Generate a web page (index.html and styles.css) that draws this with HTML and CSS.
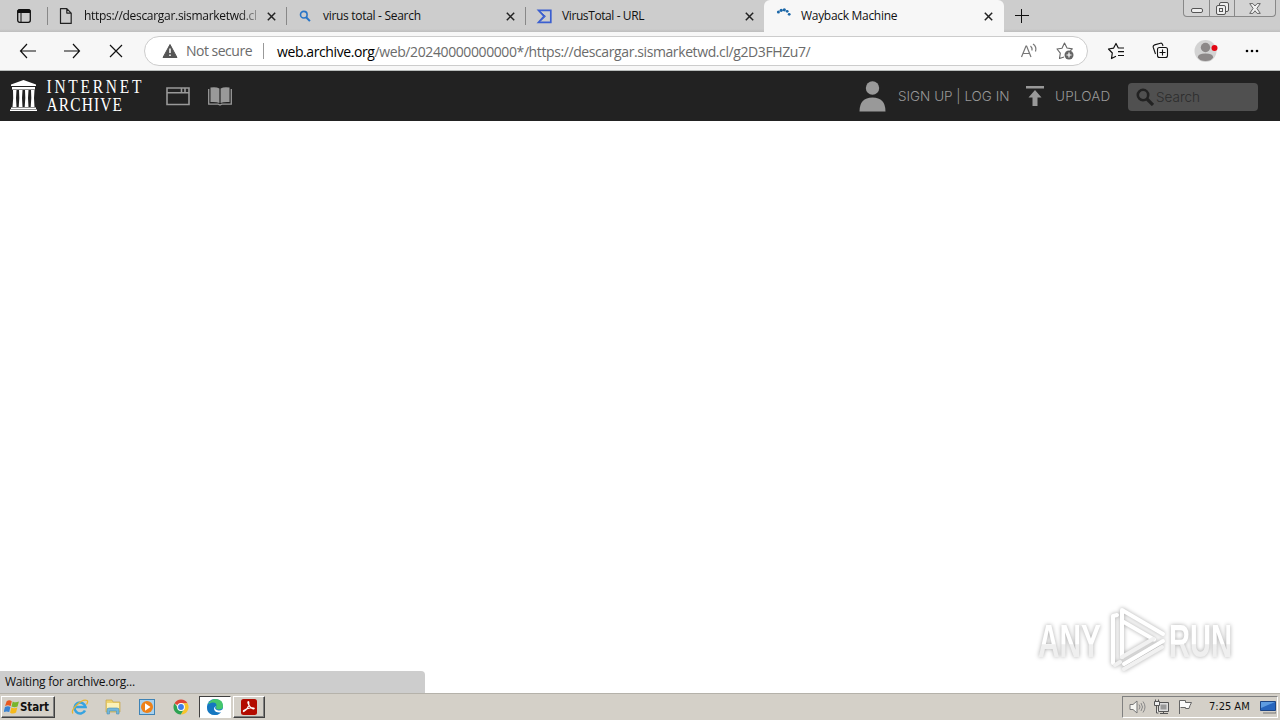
FILE: index.html
```html
<!DOCTYPE html>
<html lang="en">
<head>
  <meta charset="UTF-8" />
  <title>Wayback Machine</title>
  <link rel="stylesheet" href="styles.css">
</head>
<body>
  <div class="tabs">
    <div class="tab-menu">
      <svg width="14" height="14" viewBox="0 0 14 14"><rect x=".7" y=".7" width="12.6" height="12.6" rx="2" fill="none" stroke="#111" stroke-width="1.3"/><path d="M1 1h12v2.500H1zM4 4v9" stroke="#111" fill="#111"/></svg>
    </div>
    <div class="tab">
      <svg class="fav" width="16" height="16" viewBox="0 0 16 16"><path d="M2.500.6h6.300l4.400 4.500v10.300H2.500zM8.800.6v4.500h4.400" fill="none" stroke="#222" stroke-width="1.200" stroke-linejoin="round"/></svg>
      <span class="title fade t1">https://descargar.sismarketwd.cl</span>
      <svg class="close" width="9" height="9" viewBox="0 0 9 9"><path d="M.8.8l7.4 7.4M8.2.8L.8 8.2"/></svg>
    </div>
    <div class="tab">
      <svg class="fav" width="16" height="16" viewBox="0 0 16 16"><circle cx="6.800" cy="6.700" r="3.300" fill="none" stroke="#2875c7" stroke-width="1.600"/><path d="M9.200 9.200l3.700 3.900" stroke="#2875c7" stroke-width="2"/></svg>
      <span class="title t2">virus total - Search</span>
      <svg class="close" width="9" height="9" viewBox="0 0 9 9"><path d="M.8.8l7.4 7.4M8.2.8L.8 8.2"/></svg>
    </div>
    <div class="tab">
      <svg class="fav" width="16" height="16" viewBox="0 0 16 16"><path d="M2.500 2.300H14.800v12H2.500L8 8.300z" fill="none" stroke="#3b5fd0" stroke-width="1.700"/><path d="M5 4.500L9.500 8.300 5 12.500" fill="none" stroke="#3b5fd0" stroke-width="1"/></svg>
      <span class="title t3">VirusTotal - URL</span>
      <svg class="close" width="9" height="9" viewBox="0 0 9 9"><path d="M.8.8l7.4 7.4M8.2.8L.8 8.2"/></svg>
    </div>
    <div class="tab active">
      <svg class="fav" width="16" height="16" viewBox="0 0 16 16"><g fill="#1b67a8"><circle cx="2.400" cy="4" r="1.500"/><circle cx="5.200" cy="2.300" r="1.600"/><circle cx="8.300" cy="1.800" r="1.600"/><circle cx="11.200" cy="3.300" r="1.400"/><circle cx="13.200" cy="6.300" r="1.400"/></g></svg>
      <span class="title t4">Wayback Machine</span>
      <svg class="close" width="9" height="9" viewBox="0 0 9 9"><path d="M.8.8l7.4 7.4M8.2.8L.8 8.2"/></svg>
    </div>
    <svg class="new-tab" width="14" height="14" viewBox="0 0 14 14"><path d="M6.500 0v14M0 6.500h14" stroke="#111" stroke-width="1"/></svg>
    <div class="win-buttons">
      <span class="min"><svg width="12" height="5" viewBox="0 0 12 5"><rect x=".5" y=".5" width="11" height="4" rx="1.500" fill="#eee" stroke="#555"/></svg></span>
      <span class="max"><svg width="13" height="13" viewBox="0 0 13 13"><g fill="#eee" stroke="#555"><rect x="3.500" y=".5" width="9" height="9" rx="1.500"/><rect x=".5" y="3.500" width="9" height="9" rx="1.500"/><rect x="3.500" y="6.500" width="3" height="3"/></g></svg></span>
      <span class="x"><svg width="12" height="11" viewBox="0 0 12 11"><path d="M.7.6h3.200L6 3 8.100.6h3.200L7.900 5.400l3.400 5H8.100L6 7.800l-2.100 2.600H.7l3.400-5z" fill="#f0f0f0" stroke="#666"/></svg></span>
    </div>
  </div>

  <div class="toolbar">
    <svg class="nav" width="18" height="16" viewBox="0 0 18 16"><path d="M17 8H1.500M8 1L1.500 8 8 15"/></svg>
    <svg class="nav" width="18" height="16" viewBox="0 0 18 16"><path d="M1 8h15.500M10 1l6.500 7-6.500 7"/></svg>
    <svg class="nav" width="18" height="16" viewBox="0 0 18 16"><path d="M3 2l12 12M15 2L3 14"/></svg>
    <div class="address">
      <svg width="18" height="16" viewBox="0 0 18 16"><path d="M9 1.500L16 14.500H2z" fill="#555" stroke="#555" stroke-linejoin="round"/><path d="M9 5.500v4.500M9 11.500v1.500" stroke="#fff" stroke-width="1.500"/></svg>
      <span class="secure">Not secure</span>
      <span class="url"><b>web.archive.org</b>/web/20240000000000*/https://descargar.sismarketwd.cl/g2D3FHZu7/</span>
      <svg class="read" width="18" height="16" viewBox="0 0 18 16"><path d="M1.500 14L6 3h.6L11 14M3 10.500h6.500M10.500 3q2 1.800 1.500 4.500M13 1q4 2.700 2.500 7.500" fill="none" stroke="#777" stroke-width="1.200"/></svg>
      <svg class="fav-add" width="18" height="18" viewBox="0 0 18 18"><path d="M8 15l-4.500 1.500.8-5.300L1 7l5-.8L8.500 1 11 6l5.300.9-2 2" fill="none" stroke="#666" stroke-width="1.100" stroke-linejoin="round"/><circle cx="13" cy="13" r="4.500" fill="#666"/><path d="M13 10.500v5M10.500 13h5" stroke="#fff" stroke-width="1.200"/></svg>
    </div>
    <svg class="favorites" width="18" height="18" viewBox="0 0 18 18"><path d="M9 14.300L4.500 16.500l.8-5.500L1.500 7l5-.8L9 1.500 11.300 6H17M11 9.700h6M11 13.500h6" fill="none" stroke="#111" stroke-width="1.200" stroke-linejoin="round"/></svg>
    <svg class="collections" width="18" height="18" viewBox="0 0 18 18"><path d="M3.500 12L1.300 5.500q-.6-2 1.200-2.600l6-1.700q1.500-.3 2 1.200l.5 1.600" fill="none" stroke="#111" stroke-width="1.100"/><rect x="5.500" y="5.500" width="10" height="10" rx="2" fill="none" stroke="#111" stroke-width="1.100"/><path d="M10.500 7.500v6M7.500 10.500h6" stroke="#111" stroke-width="1.100"/></svg>
    <svg class="profile" width="24" height="24" viewBox="0 0 24 24"><circle cx="11.500" cy="12" r="11" fill="#d3d3d3"/><circle cx="11.500" cy="8.500" r="4.700" fill="#8c8888"/><path d="M3.800 18.500q0-4 7.700-4t7.700 4q-2 3.500-7.700 3.500t-7.700-3.500" fill="#8c8888"/><circle cx="20.500" cy="9" r="3" fill="#e30613"/></svg>
    <svg class="more" width="14" height="4" viewBox="0 0 14 4"><circle cx="2" cy="2" r="1.300"/><circle cx="7" cy="2" r="1.300"/><circle cx="12" cy="2" r="1.300"/></svg>
  </div>

  <nav class="archive-nav">
    <svg class="logo" width="140" height="38" viewBox="0 -3 140 38">
      <g fill="#fff">
        <path d="M1 4.500L13.500 0 26 4.500V6H1zM2 7h23v2.500H2zM1 27.500h25V29H1zM0 29.500h27V31H0z"/>
        <path d="M3 10h3.500l-.5 8 .5 9H2.500l.7-9zM9 10h3.500l-.5 8 .5 9H8.700l.6-9zM15 10h3.500l-.5 8 .5 9h-3.800l.6-9zM21 10h3.500l-.5 8 .5 9h-3.800l.6-9z"/>
      </g>
      <text class="internet" transform="translate(36.500 13) scale(.86 1)">INTERNET</text>
      <text class="archive" transform="translate(36.500 30.500) scale(.86 1)">ARCHIVE</text>
    </svg>
    <svg class="web" width="24" height="19" viewBox="0 0 24 19"><path d="M1 1h22v16.500H1zM1 5.700h22M15.500 1v4M19 1v4" fill="none" stroke="#999" stroke-width="1.600"/></svg>
    <svg class="book" width="24" height="19" viewBox="0 0 24 19"><path d="M2.500.5Q8-.5 11.400 1.500V16Q8 14.500 2.500 15zM21.500.5Q16-.5 12.600 1.500V16q3.400-1.500 8.900-1z" fill="#999"/><path d="M.7 2v15.200h9.500l1.800.8 1.800-.8h9.500V2" fill="none" stroke="#999" stroke-width="1.300"/></svg>
    <svg class="user" width="27" height="31" viewBox="0 0 27 31"><circle cx="13.500" cy="7" r="6.700" fill="#999"/><path d="M.5 30.500Q.5 16.500 13.500 16.500T26.500 30.500z" fill="#999"/></svg>
    <span class="login">SIGN UP | LOG IN</span>
    <svg class="up" width="20" height="20" viewBox="0 0 20 20"><path d="M1 0h18v2.500H1zM10 4l6.500 7.500h-4V20h-5v-8.500h-4z" fill="#999"/></svg>
    <span class="upload">UPLOAD</span>
    <div class="search">
      <svg width="18" height="18" viewBox="0 0 18 18"><circle cx="7" cy="7" r="5.200" fill="none" stroke="#222" stroke-width="2.600"/><path d="M11 11l6 6" stroke="#222" stroke-width="3.200"/></svg>
      <span>Search</span>
    </div>
  </nav>

  <main>
    <svg class="watermark" width="220" height="76" viewBox="0 0 220 76">
      <defs>
        <linearGradient id="fade" x1="0" y1="0" x2="0" y2="1"><stop offset=".56" stop-color="#fff"/><stop offset=".58" stop-color="#efefef"/></linearGradient>
      </defs>
      <g class="mark">
        <text x="7" y="54" textLength="63" lengthAdjust="spacingAndGlyphs">ANY</text>
        <text x="138" y="54" textLength="63" lengthAdjust="spacingAndGlyphs">RUN</text>
        <g fill="none" stroke="#fff" stroke-width="4" stroke-linejoin="round" stroke-linecap="round">
          <path d="M91 54V7l41 24M91 18l32 18.500M82 60V13l4-1M132 38L93 61"/>
          <path d="M91 54l31-18M84 62l5-3M93 66l38-22" stroke="#f1f1f1"/>
        </g>
      </g>
    </svg>
    <div class="status">Waiting for archive.org...</div>
  </main>

  <footer class="taskbar">
    <div class="start">
      <svg width="16" height="16" viewBox="0 0 15 15"><path d="M2.500 2Q5 .3 7.300 2L6.200 6.700Q4 5.200 1 6.500z" fill="#e9591f"/><path d="M8.200 2.300q2.500 1.600 5.800.1L12.700 7Q10 8.500 7 7z" fill="#79b52d"/><path d="M.9 7.500Q4 6 6 7.600L4.900 12.300Q2.500 11-.3 12.200z" fill="#3a83d2"/><path d="M6.900 8q2.500 1.500 5.600 0l-1.200 4.700Q8.500 14.500 5.700 12.800z" fill="#f6b91b"/></svg>
      <span>Start</span>
    </div>
    <div class="task ie"><svg width="18" height="18" viewBox="0 0 18 18"><path d="M14 12.500A5.500 5.500 0 1 1 14.500 9H4.500" fill="none" stroke="#36a3e0" stroke-width="2.600"/><path d="M2 15.500C-1 12 11 0 16 2.500q1.500 1-.5 4" fill="none" stroke="#e7b52e" stroke-width="1.300"/></svg></div>
    <div class="task"><svg width="18" height="18" viewBox="0 0 18 18"><path d="M2 2h6l1 2h7v10H2z" fill="#eed36e" stroke="#c5a64a" stroke-width=".7"/><path d="M3 5h12v5H3z" fill="#fbf1b8"/><path d="M3 16v-4q0-2 2-2h8q2 0 2 2v4h-2.500v-3h-7v3z" fill="#73b7db" stroke="#4c92b9" stroke-width=".6"/></svg></div>
    <div class="task"><svg width="18" height="18" viewBox="0 0 18 18"><rect x="1.500" y="1.500" width="15" height="15" fill="#a8d1ee" stroke="#3f83b5"/><circle cx="9" cy="9" r="6" fill="#ee8118"/><path d="M7 5.200L12.500 9 7 12.800z" fill="#fff"/></svg></div>
    <div class="task"><svg width="18" height="18" viewBox="0 0 18 18"><path d="M9 9L2.500 5.300A7.500 7.500 0 0 1 15.500 5.200H9z" fill="#df4534"/><path d="M9 9L9 5.200h6.500A7.500 7.500 0 0 1 9 16.500L12.500 10z" fill="#f7c52b"/><path d="M9 9l3 2-3.200 5.500A7.500 7.500 0 0 1 2.500 5.200L6 10z" fill="#2ea352"/><circle cx="9" cy="9" r="3.900" fill="#fff"/><circle cx="9" cy="9" r="2.900" fill="#3d7ee8"/></svg></div>
    <div class="task open current"><svg width="18" height="18" viewBox="0 0 18 18"><circle cx="9" cy="9" r="8" fill="#147dcc"/><path d="M2 6Q5 1 10 1q7 .5 7 7 0 4-5 3.500-2.500-.4-1.700-2.300Q11 4 2 6" fill="#45c76c"/><path d="M1 9q2-4.500 6-4.500 3.500 0 3.500 3.200C8 7.500 6.500 11.500 11 12.700q2.700.7 4.800-.4Q13.500 17 9 17 1 17 1 9" fill="#1577c0"/><path d="M10 8q-2.500 3 1.500 4.300 3 .8 5-1l1.500 1-1.700 2Q9 15.500 8 11q0-2 2-3" fill="#fff"/></svg></div>
    <div class="task open"><svg width="18" height="18" viewBox="0 0 18 18"><rect x="1" y="1" width="16" height="16" rx="2.500" fill="#b30b00"/><path d="M3.800 13.500C7 12 9.500 7.500 8.800 4.200c-.3-1-1.200-.4-.8.800.8 3 3.700 6 5.700 5.800 1.500-.4-.5-1.500-3.700-.8-2.200.4-4.700 1.300-6.200 2.500-.8.800-.3 1.200 0 1" fill="none" stroke="#fff" stroke-width="1.200"/></svg></div>
    <div class="tray">
      <svg width="17" height="16" viewBox="0 0 17 16"><path d="M1 5.500h3L8 2v12l-4-3.500H1z" fill="#f6f6f2" stroke="#777"/><path d="M10 5.500q2 2.500 0 5M12 4q3 4 0 8M14 2.500q4 5.500 0 11" fill="none" stroke="#888"/></svg>
      <svg width="17" height="16" viewBox="0 0 17 16"><path d="M5.500 3.500h10v9h-10zM7 14.500h8M10.500 12.500V15" fill="#ddd" stroke="#555"/><path d="M7.500 5.500h6v5h-6z" fill="#999"/><path d="M1.500 2.500h5v4h-5zM2.500.500v2M5.500.500v2M3.500 6.500V14h2" fill="#eee" stroke="#555"/></svg>
      <svg width="17" height="16" viewBox="0 0 17 16"><path d="M2.500 15V1.500h6v2h6L13 6.500l-1 3H8.500v-1h-5" fill="#fafafa" stroke="#666"/></svg>
      <span class="clock">7:25 AM</span>
      <svg class="desktop" width="16" height="14" viewBox="0 0 16 14"><path d="M.5 1.500h15v9H.5z" fill="#2765bd" stroke="#1d4584"/><path d="M1 2h14L1 8z" fill="#5e9ce1"/><path d="M3 13h13v-1.500" stroke="#777" fill="none"/></svg>
    </div>
  </footer>
</body>
</html>
```
FILE: styles.css
```css
* {
  box-sizing: border-box;
}
body {
  margin: 0;
  width: 1280px;
  height: 720px;
  overflow: hidden;
  display: flex;
  flex-direction: column;
  background: #fff;
  font-family: "Open Sans", "Noto Sans", sans-serif;
  font-size: 12px;
  color: #111;
}
svg {
  display: block;
  flex: none;
}

/* tab strip */
.tabs {
  height: 32px;
  flex: none;
  display: flex;
  background: linear-gradient(#cdcdcd 29px, #bebebe);
}
.tab-menu {
  width: 48px;
  padding: 9px 0 0 17px;
}
.tab {
  position: relative;
  width: 239px;
  display: flex;
  align-items: center;
  padding: 0 11px 0 10px;
}
.tab::before {
  content: "";
  position: absolute;
  left: -1px;
  top: 7px;
  width: 1px;
  height: 18px;
  background: #888;
}
.tab.active {
  width: 240px;
  margin-left: -1px;
  padding-left: 12px;
  background: #f7f7f7;
  border-radius: 6px 6px 0 0;
}
.tab.active::before {
  display: none;
}
.title {
  flex: 1;
  margin-left: 10px;
  line-height: 18px;
  letter-spacing: -0.3px;
  white-space: nowrap;
}
.fade {
  -webkit-mask-image: linear-gradient(90deg, #000 155px, transparent 180px);
  mask-image: linear-gradient(90deg, #000 155px, transparent 180px);
}
.t1 {
  letter-spacing: -0.3px;
}
.t3 {
  letter-spacing: -0.4px;
}
.t4 {
  margin-left: 9px;
}
.close {
  stroke: #222;
  stroke-width: 1.5;
}
.new-tab {
  margin: 9px 0 0 11px;
}
.win-buttons {
  display: flex;
  width: 93px;
  height: 17px;
  margin: 0 4px 0 auto;
  border: 1px solid #888;
  border-top: 0;
  border-radius: 0 0 4px 4px;
  background: #d3d3d3;
}
.win-buttons span {
  display: flex;
  justify-content: center;
}
.min {
  width: 25px;
  padding-top: 8px;
}
.max {
  width: 26px;
  padding-top: 2px;
  border: 1px solid #888;
  border-width: 0 1px;
}
.x {
  flex: 1;
  padding-top: 3px;
}

/* toolbar */
.toolbar {
  height: 39px;
  flex: none;
  display: flex;
  align-items: center;
  padding-left: 19px;
  background: #f7f7f7;
  border-bottom: 1px solid #b9bdbb;
}
.nav {
  margin-right: 26px;
  fill: none;
  stroke: #111;
  stroke-width: 1.2;
}
.address {
  width: 944px;
  height: 30px;
  margin-left: -7px;
  display: flex;
  align-items: center;
  padding-left: 16px;
  background: #fff;
  border: 1px solid #ccc;
  border-radius: 15px;
  font-size: 14px;
  color: #6b6b6b;
}
.secure {
  width: 78px;
  margin-left: 7px;
  border-right: 1px solid #999;
  line-height: 16px;
  letter-spacing: -0.5px;
}
.url {
  margin-left: 13px;
  letter-spacing: -0.4px;
  white-space: nowrap;
}
.url b {
  font-weight: normal;
  color: #000;
}
.read {
  margin-left: auto;
}
.fav-add {
  margin: 0 13px 0 18px;
}
.favorites {
  margin-left: 19px;
}
.collections {
  margin-left: 27px;
}
.profile {
  margin-left: 24px;
}
.more {
  margin-left: 27px;
}

/* archive header */
.archive-nav {
  height: 50px;
  flex: none;
  display: flex;
  align-items: center;
  padding-left: 10px;
  background: #222;
  color: #999;
}
.logo text {
  fill: #fff;
  font-family: "Liberation Serif", serif;
  font-size: 18.5px;
}
.logo .internet {
  font-size: 18px;
  letter-spacing: 3.2px;
}
.logo .archive {
  font-size: 18px;
  letter-spacing: 1.3px;
}
.web {
  margin-left: 16px;
}
.book {
  margin-left: 18px;
}
.user {
  margin-left: 627px;
}
.login,
.upload,
.search {
  font-family: Inter, "Liberation Sans", sans-serif;
  font-weight: 300;
  font-size: 13.5px;
}
.login {
  width: 116px;
  margin-left: 12px;
  white-space: nowrap;
}
.up {
  margin-left: 11px;
}
.upload {
  width: 63px;
  margin-left: 10px;
  letter-spacing: 0.2px;
}
.search {
  width: 130px;
  height: 28px;
  margin: 1px 0 0 10px;
  display: flex;
  align-items: center;
  gap: 2px;
  padding: 1px 0 0 8px;
  background: #505050;
  border-radius: 4px;
  color: #2c2c2c;
}

/* page body */
main {
  position: relative;
  flex: 1;
  display: flex;
  align-items: flex-end;
}
.watermark {
  position: absolute;
  left: 1031px;
  top: 482px;
}
.mark {
  filter: drop-shadow(0 0 2px #aaa);
}
.mark text {
  fill: url(#fade);
  font-family: "Liberation Sans", sans-serif;
  font-weight: bold;
  font-size: 47px;
}
.status {
  width: 425px;
  height: 22px;
  padding-left: 5px;
  line-height: 22px;
  letter-spacing: -0.24px;
  background: #cdcdcd;
  border-radius: 0 4px 0 0;
  color: #111;
}

/* taskbar */
.taskbar {
  height: 27px;
  flex: none;
  display: flex;
  align-items: center;
  padding: 0 2px 1px 1px;
  background: #d4d0c8;
  border-top: 1px solid #b5b2aa;
}
.start {
  width: 54px;
  height: 22px;
  margin-right: 8px;
  display: flex;
  align-items: center;
  padding-left: 2px;
  border: 1px solid;
  border-color: #fff #404040 #404040 #fff;
  box-shadow: inset -1px -1px #808080;
  font-family: "DejaVu Sans Condensed", "DejaVu Sans", sans-serif;
  font-size: 11.5px;
  font-weight: bold;
  letter-spacing: -0.1px;
}
.task {
  width: 33.6px;
  height: 22px;
  display: flex;
  align-items: center;
  justify-content: center;
}
.open {
  width: 32px;
  margin-left: 2px;
  border: 1px solid;
  border-color: #fff #404040 #404040 #fff;
  box-shadow: inset -1px -1px #808080;
}
.current {
  background: #fff;
  border-color: #404040 #fff #fff #404040;
  box-shadow: none;
}
.tray {
  width: 156px;
  height: 22px;
  margin-left: auto;
  display: flex;
  align-items: center;
  gap: 7px;
  padding-left: 6px;
  border: 1px solid;
  border-color: #808080 #fff #fff #808080;
}
.clock {
  width: 44px;
  margin-left: 8px;
  font-family: "DejaVu Sans Condensed", "DejaVu Sans", sans-serif;
  font-size: 11px;
  white-space: nowrap;
}
```
